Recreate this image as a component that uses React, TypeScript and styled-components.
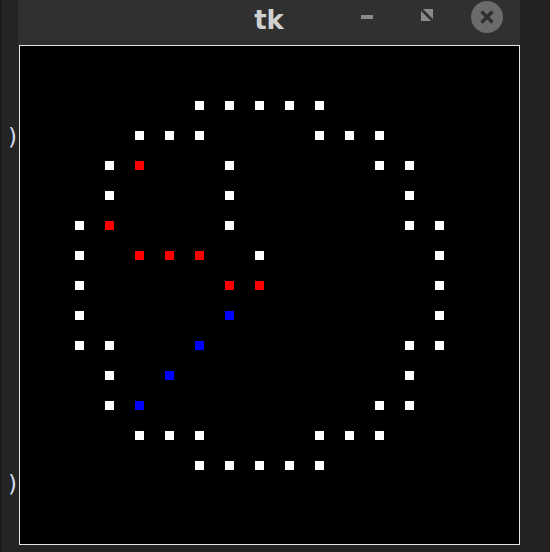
import React from "react";
import styled, { createGlobalStyle } from "styled-components";

const Global = createGlobalStyle`
  html, body {
    margin: 0;
    padding: 0;
    width: 550px;
    height: 552px;
    overflow: hidden;
    background: #232323;
  }
  body {
    font-family: "DejaVu Sans", sans-serif;
  }
`;

const Screen = styled.div`
  display: flex;
  width: 550px;
  height: 552px;
  background: #222222;
`;

const Strip = styled.div`
  width: 18px;
  flex: none;
  box-sizing: border-box;
  border-left: 2px solid #1b1b1b;
  background: #242424;
  display: flex;
  flex-direction: column;
  align-items: flex-start;
  padding-top: 125px;
  padding-left: 4px;
`;

const Paren = styled.span<{ $gap?: number }>`
  font-family: "DejaVu Sans Mono", monospace;
  font-size: 23px;
  line-height: 24px;
  color: #d2dcec;
  margin-top: ${(p) => p.$gap ?? 0}px;
`;

const Window = styled.div`
  width: 502px;
  flex: none;
  display: flex;
  flex-direction: column;
`;

const TitleBar = styled.div`
  height: 45px;
  background: #303030;
  display: grid;
  grid-template-columns: 1fr auto 1fr;
  align-items: start;
`;

const Title = styled.div`
  grid-column: 2;
  font-family: "DejaVu Sans", sans-serif;
  font-weight: 700;
  font-size: 26px;
  line-height: 36px;
  padding-top: 2px;
  color: #d0d0d0;
`;

const Controls = styled.div`
  grid-column: 3;
  display: flex;
  justify-content: flex-end;
  align-items: center;
  gap: 28px;
  padding-top: 1px;
  padding-right: 17px;
`;

const ControlButton = styled.div`
  width: 32px;
  height: 32px;
  display: flex;
  align-items: center;
  justify-content: center;
`;

const MinBar = styled.div`
  width: 12px;
  height: 4px;
  background: #8a8a8a;
`;

const MaxIcon = styled.svg`
  width: 12px;
  height: 12px;
  margin-bottom: 4px;
`;

const CloseCircle = styled.div`
  width: 32px;
  height: 32px;
  border-radius: 50%;
  background: #6b6b6b;
  display: flex;
  align-items: center;
  justify-content: center;
`;

const Body = styled.div`
  flex: 1;
  padding-left: 1px;
`;

const Canvas = styled.div`
  width: 501px;
  height: 500px;
  box-sizing: border-box;
  border: 1px solid #e6e6e6;
  background: #000000;
`;

const Drawing = styled.svg`
  display: block;
  width: 499px;
  height: 498px;
`;

const GRID = [
  "....wwwww....",
  "..www...www..",
  ".wr..w....ww.",
  ".w...w.....w.",
  "wr...w.....ww",
  "w.rrr.w.....w",
  "w....rr.....w",
  "w....b......w",
  "ww..b......ww",
  ".w.b.......w.",
  ".wb.......ww.",
  "..www...www..",
  "....wwwww....",
];

const COLORS: Record<string, string> = {
  w: "#ffffff",
  r: "#ff0000",
  b: "#0000ff",
};

export default function App() {
  const cells: React.ReactNode[] = [];
  GRID.forEach((row, r) => {
    row.split("").forEach((ch, c) => {
      if (ch !== ".") {
        cells.push(
          <rect
            key={`${r}-${c}`}
            x={55 + 30 * c}
            y={55 + 30 * r}
            width={9}
            height={9}
            fill={COLORS[ch]}
          />
        );
      }
    });
  });

  return (
    <>
      <Global />
      <Screen>
        <Strip>
          <Paren>)</Paren>
          <Paren $gap={323}>)</Paren>
        </Strip>
        <Window>
          <TitleBar>
            <Title>tk</Title>
            <Controls>
              <ControlButton>
                <MinBar />
              </ControlButton>
              <ControlButton>
                <MaxIcon viewBox="0 0 12 12">
                  <path d="M2 0 H12 V10 Z" fill="#8a8a8a" />
                  <path d="M0 2 V12 H10 Z" fill="#8a8a8a" />
                </MaxIcon>
              </ControlButton>
              <CloseCircle>
                <svg width="14" height="14" viewBox="0 0 14 14">
                  <path
                    d="M1.5 1.5 L12.5 12.5 M12.5 1.5 L1.5 12.5"
                    stroke="#2f2f2f"
                    strokeWidth="3.4"
                    strokeLinecap="butt"
                  />
                </svg>
              </CloseCircle>
            </Controls>
          </TitleBar>
          <Body>
            <Canvas>
              <Drawing viewBox="0 0 499 498">{cells}</Drawing>
            </Canvas>
          </Body>
        </Window>
      </Screen>
    </>
  );
}
